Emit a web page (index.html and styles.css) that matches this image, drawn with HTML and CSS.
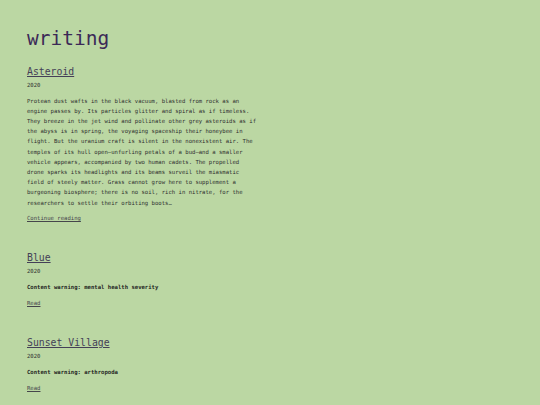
FILE: index.html
```html
<!DOCTYPE html>
<html lang="en">
<head>
<meta charset="utf-8">
<title>writing</title>
<link rel="stylesheet" href="styles.css">
</head>
<body>
<main class="page">
  <h1 class="title">writing</h1>
  <article class="post">
    <h2 class="post-title"><a href="#">Asteroid</a></h2>
    <p class="date">2020</p>
    <p class="excerpt">Protean dust wafts in the black vacuum, blasted from rock as an engine passes by. Its particles glitter and spiral as if timeless. They breeze in the jet wind and pollinate other grey asteroids as if the abyss is in spring, the voyaging spaceship their honeybee in flight. But the uranium craft is silent in the nonexistent air. The temples of its hull open—unfurling petals of a bud—and a smaller vehicle appears, accompanied by two human cadets. The propelled drone sparks its headlights and its beams surveil the miasmatic field of steely matter. Grass cannot grow here to supplement a burgeoning biosphere; there is no soil, rich in nitrate, for the researchers to settle their orbiting boots…</p>
    <p class="more"><a href="#">Continue reading</a></p>
  </article>
  <article class="post">
    <h2 class="post-title"><a href="#">Blue</a></h2>
    <p class="date">2020</p>
    <p class="warning">Content warning: mental health severity</p>
    <p class="more"><a href="#">Read</a></p>
  </article>
  <article class="post">
    <h2 class="post-title"><a href="#">Sunset Village</a></h2>
    <p class="date">2020</p>
    <p class="warning">Content warning: arthropoda</p>
    <p class="more"><a href="#">Read</a></p>
  </article>
</main>
</body>
</html>
```
FILE: styles.css
```css
html, body {
  margin: 0;
  padding: 0;
  background: #bbd7a3;
}
body {
  font-family: "DejaVu Sans Mono", "Liberation Mono", monospace;
  color: #2e2e2e;
}
.page {
  padding: 27px 0 0 27px;
}
.title {
  margin: 0 0 14.6px;
  font-size: 19.5px;
  line-height: 24px;
  font-weight: normal;
  color: #3b2957;
}
.post {
  margin-bottom: 29px;
}
.post-title {
  margin: 0 0 2px;
  font-size: 9.8px;
  line-height: 12px;
  font-weight: normal;
}
.post-title a {
  color: #443f57;
  text-decoration: underline;
}
.date {
  margin: 0 0 6px;
  font-size: 5.6px;
  line-height: 10px;
  color: #2e2e2e;
}
.excerpt {
  margin: 0 0 5.5px;
  width: 68.5ch;
  font-size: 5.6px;
  line-height: 10.2px;
  color: #2e2e2e;
}
.warning {
  margin: 0 0 6px;
  font-size: 5.6px;
  line-height: 10px;
  font-weight: bold;
  color: #1f1f1f;
}
.more {
  margin: 0;
  font-size: 5.6px;
  line-height: 10px;
}
.more a {
  color: #45454b;
  text-decoration: underline;
}
```
